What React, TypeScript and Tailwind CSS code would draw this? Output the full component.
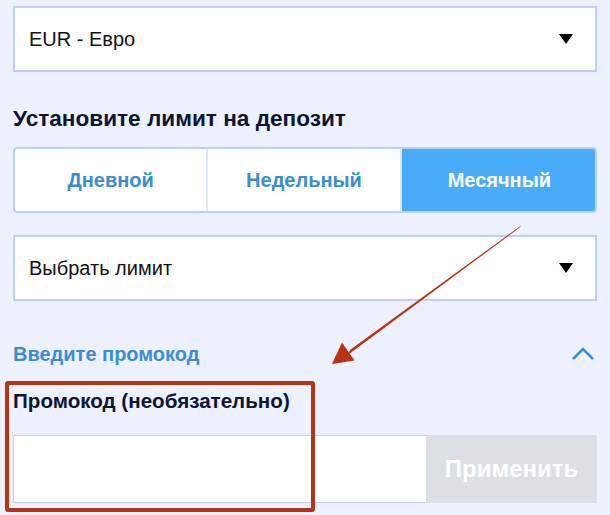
import React from "react";

function Caret() {
	return (
		<svg width="14" height="10" viewBox="0 0 14 10" className="shrink-0">
			<polygon points="0,0 14,0 7,10" fill="#000" />
		</svg>
	);
}

function SelectBox({ label }: { label: string }) {
	return (
		<div className="h-[66px] bg-white border-2 border-[#bcd0f8] flex items-center justify-between pl-[14px] pr-[22px]">
			<span className="text-[20px] text-[#111]">{label}</span>
			<Caret />
		</div>
	);
}

const tabs = ["Дневной", "Недельный", "Месячный"];

export default function App() {
	const active = 2;

	return (
		<div
			className="relative w-[610px] h-[515px] overflow-hidden bg-[#edf1fd]"
			style={{ fontFamily: '"Liberation Sans", Arial, sans-serif' }}
		>
			<div className="flex flex-col px-[13px] pt-[6px]">
				<SelectBox label="EUR - Евро" />

				<h2 className="mt-[35px] text-[22.6px] leading-[24px] font-bold text-[#0b1636]">
					Установите лимит на депозит
				</h2>

				<div className="mt-[16px] h-[66px] grid grid-cols-3 rounded-[4px] overflow-hidden border-2 border-[#bcd0f8] bg-white">
					{tabs.map((t, i) => (
						<div
							key={t}
							className={
								i === active
									? "flex items-center justify-center bg-[#4aacf8] text-white text-[20px] font-bold -my-[2px] -mr-[2px]"
									: "flex items-center justify-center text-[#3a8dd5] text-[20px] font-bold border-r-2 border-[#dde7fb]"
							}
						>
							{t}
						</div>
					))}
				</div>

				<div className="mt-[22px]">
					<SelectBox label="Выбрать лимит" />
				</div>

				<div className="mt-[41px] flex items-center justify-between h-[24px]">
					<span className="text-[20px] leading-[24px] font-bold text-[#3a8dd5]">Введите промокод</span>
					<svg width="24" height="14" viewBox="0 0 24 14" className="mr-[2px]">
						<polyline points="2,12 12,2 22,12" fill="none" stroke="#3a8dd5" strokeWidth="2.6" />
					</svg>
				</div>

				<div className="mt-[23px] text-[20.6px] leading-[24px] font-bold text-[#0b1636]">
					Промокод (необязательно)
				</div>

				<div className="mt-[22px] h-[68px] flex">
					<div className="flex-1 bg-white border border-r-0 border-[#bcd0f8] rounded-l-[2px]" />
					<div className="w-[171px] bg-[#dcdfe3] flex items-center justify-center text-white text-[24px] font-bold">
						Применить
					</div>
				</div>
			</div>

			<div className="absolute left-[5px] top-[381px] w-[310px] h-[131px] border-4 border-[#b83214] rounded-[3px]" />

			<svg className="absolute inset-0 pointer-events-none" width="610" height="515" viewBox="0 0 610 515">
				<polygon
					points="521.2,225.4 519.4,227.8 345,357 350.6,349.6"
					fill="#b83214"
				/>
				<polygon points="332,364 354.5,360.5 342,342.5" fill="#b83214" />
			</svg>
		</div>
	);
}
